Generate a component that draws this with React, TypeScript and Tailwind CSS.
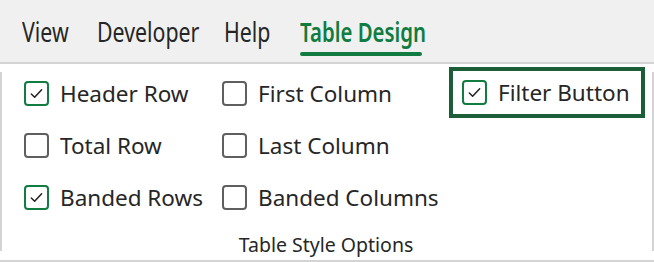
import type { ReactNode } from "react";

const font = { fontFamily: '"Noto Sans", "Open Sans", sans-serif' };

function Check({ checked }: { checked?: boolean }) {
  return (
    <span
      className={`flex h-[25px] w-[25px] shrink-0 items-center justify-center rounded-[4px] border-2 bg-white ${
        checked ? "border-[#107c41]" : "border-[#5f5f5f]"
      }`}
    >
      {checked && (
        <svg width="15" height="15" viewBox="0 0 16 16" fill="none">
          <path d="M2.5 8.5l3.5 3.5 7.5-8" stroke="#222" strokeWidth="1.6" strokeLinecap="round" strokeLinejoin="round" />
        </svg>
      )}
    </span>
  );
}

function Option({ label, checked }: { label: string; checked?: boolean }) {
  return (
    <div className="flex h-[25px] items-center gap-[11px] whitespace-nowrap text-[22.5px] text-[#262626]">
      <Check checked={checked} />
      <span className="relative top-[1px] leading-none">{label}</span>
    </div>
  );
}

function Tab({ children, active, className }: { children: ReactNode; active?: boolean; className: string }) {
  return (
    <div className={`relative h-full shrink-0 ${className}`}>
      <span
        className={`absolute left-0 top-[18px] origin-left whitespace-nowrap text-[27px] leading-none ${
          active ? "scale-x-[0.755] font-semibold text-[#107c41]" : "scale-x-[0.79] text-[#262626]"
        }`}
      >
        {children}
      </span>
      {active && <span className="absolute left-0 right-0 top-[52px] h-[4px] rounded-full bg-[#107c41]" />}
    </div>
  );
}

export default function App() {
  return (
    <div className="h-[262px] w-[654px] overflow-hidden bg-white" style={font}>
      <div className="flex h-[62px] bg-[#f0f0f0] pl-[22px]">
        <Tab className="w-[45px]">View</Tab>
        <Tab className="ml-[30px] w-[98px]">Developer</Tab>
        <Tab className="ml-[29px] w-[44px]">Help</Tab>
        <Tab className="ml-[32px] w-[122px]" active>
          Table Design
        </Tab>
      </div>
      <div className="h-[2px] bg-[#d4d4d4]" />
      <div className="flex h-[198px] flex-col border-b-2 border-[#d4d4d4]">
        <div className="flex flex-1 pb-[9px] pt-[8px]">
          <div className="w-[2px] bg-[#d4d4d4]" />
          <div className="relative flex flex-1 flex-col">
            <div className="flex pl-[22px] pt-[9px]">
              <div className="flex w-[198px] flex-col gap-[27px]">
                <Option label="Header Row" checked />
                <Option label="Total Row" />
                <Option label="Banded Rows" checked />
              </div>
              <div className="flex w-[227px] flex-col gap-[27px]">
                <Option label="First Column" />
                <Option label="Last Column" />
                <Option label="Banded Columns" />
              </div>
              <div className="-mt-[14px] self-start">
                <div className="flex h-[51px] w-[196px] items-center border-[4px] border-[#1b5e38] pl-[9px]">
                  <Option label="Filter Button" checked />
                </div>
              </div>
            </div>
            <div className="mt-auto text-center text-[19.5px] leading-none text-[#262626]">
              <span className="relative top-[3px] -ml-[2px]">Table Style Options</span>
            </div>
          </div>
          <div className="w-[2px] bg-[#d4d4d4]" />
        </div>
      </div>
    </div>
  );
}
